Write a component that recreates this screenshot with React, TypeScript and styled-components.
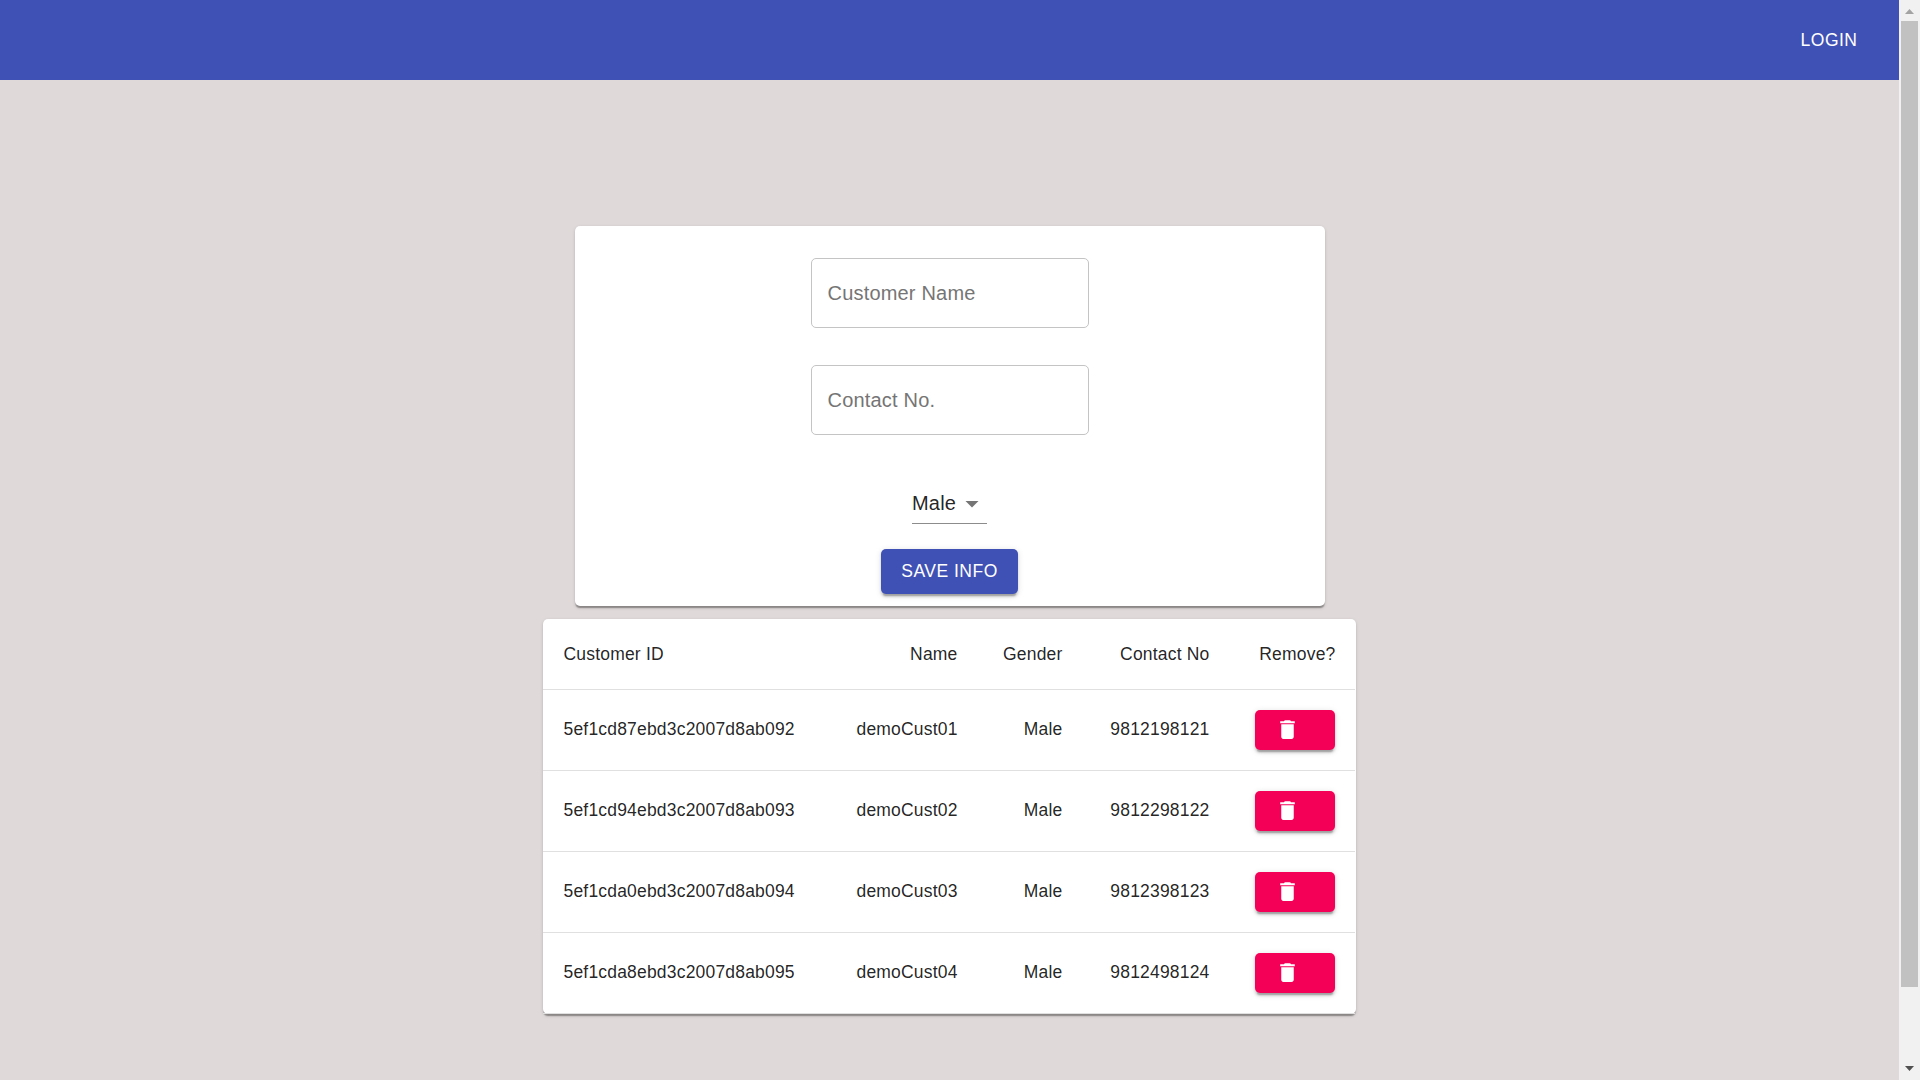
import React from "react";
import styled, { createGlobalStyle } from "styled-components";

const GlobalStyle = createGlobalStyle`
  * { box-sizing: border-box; }
  body {
    margin: 0;
    overflow: hidden;
    background: #dfd9d9;
    font-family: "Liberation Sans", Arial, Helvetica, sans-serif;
  }
`;

const Window = styled.div`
  display: flex;
  height: 100vh;
`;

const Page = styled.div`
  flex: 1;
  min-width: 0;
  display: flex;
  flex-direction: column;
`;

const AppBar = styled.header`
  height: 80px;
  flex: none;
  display: flex;
  justify-content: flex-end;
  align-items: center;
  padding: 0 31.5px 1px 0;
  background: #3f51b5;
`;

const Button = styled.button`
  border: 0;
  border-radius: 5px;
  font-family: inherit;
  font-size: 17.5px;
  font-weight: 500;
  line-height: 30px;
  letter-spacing: 0.5px;
  text-transform: uppercase;
  white-space: nowrap;
  color: #fff;
`;

const TextButton = styled(Button)`
  padding: 7.5px 10px;
  background: transparent;
`;

const SHADOW_RAISED =
  "0 3.75px 1.25px -2.5px rgba(0,0,0,.2), 0 2.5px 2.5px 0 rgba(0,0,0,.14), 0 1.25px 6.25px 0 rgba(0,0,0,.12)";

const SaveButton = styled(Button)`
  width: 137px;
  height: 45px;
  margin-top: 25px;
  padding: 0 0 2px;
  background: #3f51b5;
  box-shadow: ${SHADOW_RAISED};
`;

const DeleteButton = styled(Button)`
  display: flex;
  align-items: center;
  width: 80px;
  height: 40px;
  margin-left: auto;
  padding: 0 20px 1px;
  background: #f50057;
  box-shadow: ${SHADOW_RAISED};
`;

const Content = styled.main`
  display: flex;
  flex-direction: column;
  align-items: center;
  padding-top: 146px;
  gap: 13px;
`;

const Paper = styled.section`
  background: #fff;
  border-radius: 5px;
  box-shadow: 0 2.5px 1.25px -1.25px rgba(0, 0, 0, 0.2),
    0 1.25px 1.25px 0 rgba(0, 0, 0, 0.14), 0 1.25px 3.75px 0 rgba(0, 0, 0, 0.12);
`;

const FormCard = styled(Paper)`
  width: 750px;
  height: 380px;
  padding-top: 32px;
  display: flex;
  flex-direction: column;
  align-items: center;
`;

const Field = styled.input`
  width: 278px;
  height: 70px;
  margin-bottom: 37px;
  padding: 1px 16px 0;
  border: 1px solid #c4c4c4;
  border-radius: 5px;
  background: transparent;
  font-family: inherit;
  font-size: 20px;
  letter-spacing: 0.19px;
  color: rgba(0, 0, 0, 0.87);
  &::placeholder {
    color: #757575;
    opacity: 1;
  }
`;

const Select = styled.div`
  display: flex;
  align-items: center;
  width: 75px;
  height: 41px;
  margin-top: 11px;
  border-bottom: 1px solid #8c8c8c;
  font-size: 20px;
  letter-spacing: 0.19px;
  color: rgba(0, 0, 0, 0.87);
`;

const Arrow = styled.svg`
  margin: 2px 0 0 auto;
  flex: none;
`;

const TablePaper = styled(Paper)`
  width: 813px;
`;

const Table = styled.table`
  width: 812px;
  table-layout: fixed;
  border-collapse: separate;
  border-spacing: 0;
  font-size: 17.5px;
  line-height: 25px;
  letter-spacing: 0.1875px;
  color: rgba(0, 0, 0, 0.87);
`;

const Col = styled.col<{ $w: number }>`
  width: ${(p) => p.$w}px;
`;

const Cell = styled.td<{ $left?: boolean }>`
  height: 81px;
  padding: 0 19.5px 2px 20.5px;
  border-bottom: 1px solid #e0e0e0;
  text-align: ${(p) => (p.$left ? "left" : "right")};
  font-weight: 400;
  white-space: nowrap;
`;

const HeadCell = styled(Cell)`
  height: 71px;
  padding-bottom: 0;
`;

const ActionCell = styled(Cell)`
  padding: 0 20px;
`;

const ScrollBar = styled.aside`
  width: 21px;
  flex: none;
  display: flex;
  flex-direction: column;
  align-items: center;
  padding: 9px 2px;
  justify-content: space-between;
  background: #f1f1f1;
`;

const Thumb = styled.div`
  width: 17px;
  height: 966px;
  margin: 7px 0 auto;
  background: #c1c1c1;
`;

const ArrowGlyph = styled.svg`
  display: block;
  flex: none;
`;

const customers = [
  { id: "5ef1cd87ebd3c2007d8ab092", name: "demoCust01", gender: "Male", contact: "9812198121" },
  { id: "5ef1cd94ebd3c2007d8ab093", name: "demoCust02", gender: "Male", contact: "9812298122" },
  { id: "5ef1cda0ebd3c2007d8ab094", name: "demoCust03", gender: "Male", contact: "9812398123" },
  { id: "5ef1cda8ebd3c2007d8ab095", name: "demoCust04", gender: "Male", contact: "9812498124" },
];

const TrashIcon = () => (
  <svg width="25" height="25" viewBox="0 0 24 24" fill="currentColor">
    <path d="M6 19c0 1.1.9 2 2 2h8c1.100 0 2-.9 2-2V7H6v12zM19 4h-3.500l-1-1h-5l-1 1H5v2h14V4z" />
  </svg>
);

export default function App() {
  return (
    <Window>
      <GlobalStyle />
      <Page>
        <AppBar>
          <TextButton>Login</TextButton>
        </AppBar>
        <Content>
          <FormCard>
            <Field placeholder="Customer Name" />
            <Field placeholder="Contact No." />
            <Select>
              Male
              <Arrow width="22" height="25" viewBox="0 0 22 25">
                <path d="M0.500 9h13l-6.500 6.500z" fill="#757575" />
              </Arrow>
            </Select>
            <SaveButton>Save Info</SaveButton>
          </FormCard>
          <TablePaper>
            <Table>
              <colgroup>
                <Col $w={293} />
                <Col $w={141} />
                <Col $w={105} />
                <Col $w={147} />
                <Col $w={126} />
              </colgroup>
              <thead>
                <tr>
                  <HeadCell as="th" $left>Customer ID</HeadCell>
                  <HeadCell as="th">Name</HeadCell>
                  <HeadCell as="th">Gender</HeadCell>
                  <HeadCell as="th">Contact No</HeadCell>
                  <HeadCell as="th">Remove?</HeadCell>
                </tr>
              </thead>
              <tbody>
                {customers.map((c) => (
                  <tr key={c.id}>
                    <Cell $left>{c.id}</Cell>
                    <Cell>{c.name}</Cell>
                    <Cell>{c.gender}</Cell>
                    <Cell>{c.contact}</Cell>
                    <ActionCell>
                      <DeleteButton aria-label="Remove">
                        <TrashIcon />
                      </DeleteButton>
                    </ActionCell>
                  </tr>
                ))}
              </tbody>
            </Table>
          </TablePaper>
        </Content>
      </Page>
      <ScrollBar>
        <ArrowGlyph width="9" height="5" viewBox="0 0 9 5">
          <path d="M0 5L4.500 0L9 5z" fill="#a3a3a3" />
        </ArrowGlyph>
        <Thumb />
        <ArrowGlyph width="9" height="5" viewBox="0 0 9 5">
          <path d="M0 0L4.500 5L9 0z" fill="#505050" />
        </ArrowGlyph>
      </ScrollBar>
    </Window>
  );
}
